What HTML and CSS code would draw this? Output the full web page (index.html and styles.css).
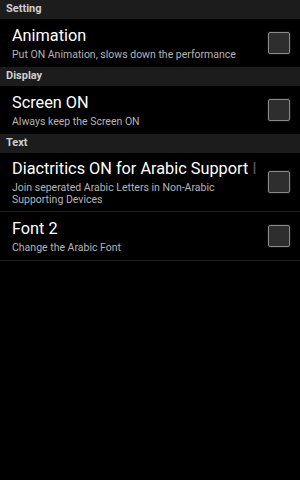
FILE: index.html
```html
<!DOCTYPE html>
<html>
	<head>
		<meta charset="utf-8" />
		<title>Settings</title>
		<link rel="stylesheet" href="styles.css">
	</head>
	<body>
		<div class="cat">Setting</div>
		<div class="pref">
			<div class="text">
				<div class="title">Animation</div>
				<div class="sum">Put ON Animation, slows down the performance</div>
			</div>
			<span class="check"></span>
		</div>
		<div class="cat">Display</div>
		<div class="pref">
			<div class="text">
				<div class="title">Screen ON</div>
				<div class="sum">Always keep the Screen ON</div>
			</div>
			<span class="check"></span>
		</div>
		<div class="cat">Text</div>
		<div class="pref tall">
			<div class="text">
				<div class="title">Diactritics ON for Arabic Support <span class="fade">I</span></div>
				<div class="sum">Join seperated Arabic Letters in Non-Arabic Supporting Devices</div>
			</div>
			<span class="check"></span>
		</div>
		<div class="pref line">
			<div class="text">
				<div class="title">Font 2</div>
				<div class="sum">Change the Arabic Font</div>
			</div>
			<span class="check"></span>
		</div>
	</body>
</html>
```

FILE: styles.css
```css
html,body{margin:0;padding:0;}
body{background:#000;font-family:Roboto,"Liberation Sans",sans-serif;color:#fff;width:300px;height:480px;overflow:hidden;}

.cat{background:#1c1c1c;color:#cfcfcf;font-size:11px;font-weight:bold;height:19px;line-height:18px;padding-left:6px;}
.pref{display:flex;align-items:center;height:48px;padding:0 10px 0 12px;}
.pref.tall{height:58px;}
.pref.line{border-top:1px solid #1e1e1e;border-bottom:1px solid #1e1e1e;}
.text{flex:1;min-width:0;}
.title{font-size:16.3px;line-height:20px;color:#fff;white-space:nowrap;}
.title .fade{color:#555;}
.sum{font-size:10.5px;line-height:11.5px;color:#b4b4b4;margin-top:3px;}
.check{flex:none;width:20px;height:20px;margin-left:8px;border:1px solid #8a8a8a;border-radius:2px;background:#2e2e2e;box-shadow:0 0 0 1px #111;}
```
